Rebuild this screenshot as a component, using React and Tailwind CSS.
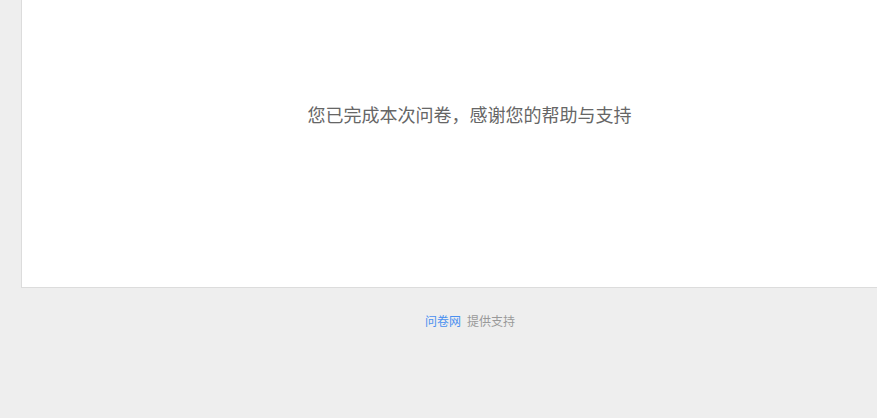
export default function App() {
  return (
    <div
      className="min-h-[418px] w-full overflow-hidden bg-[#eeeeee]"
      style={{ fontFamily: '"Noto Sans CJK SC", "Noto Sans", sans-serif' }}
    >
      <div className="ml-[21px] flex h-[288px] w-[897px] items-start justify-center border-x border-b border-[#dcdcdc] bg-white pt-[101px]">
        <p className="text-[18px] leading-[26px] text-[#666666]">
          您已完成本次问卷，感谢您的帮助与支持
        </p>
      </div>
      <div className="ml-[21px] flex w-[898px] justify-center gap-[6px] pt-[24px] text-[12px] leading-[18px]">
        <span className="text-[#4a90f0]">问卷网</span>
        <span className="text-[#999999]">提供支持</span>
      </div>
    </div>
  );
}
